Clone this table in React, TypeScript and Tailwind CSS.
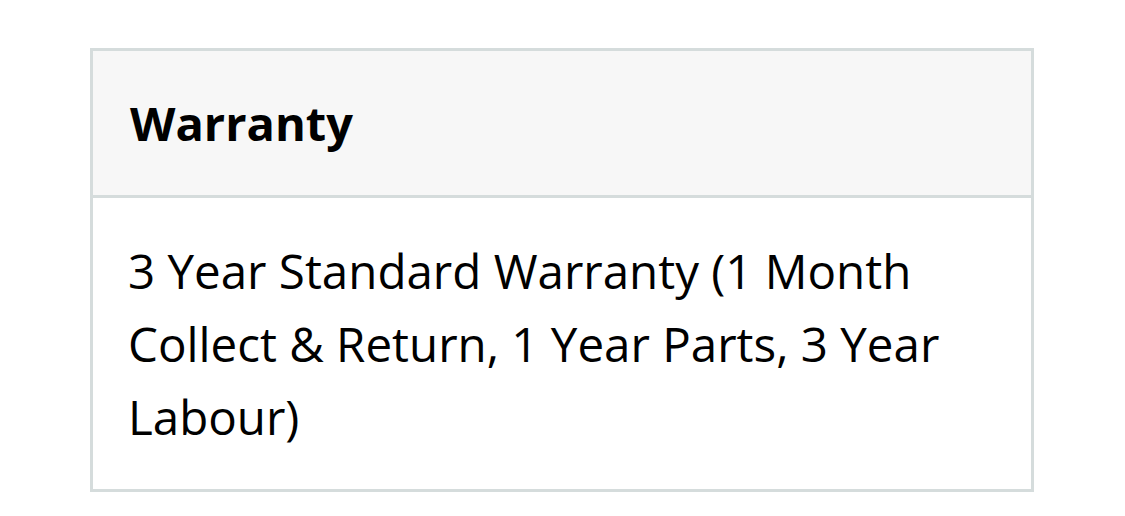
export default function App() {
  return (
    <div className="w-[1125px] h-[516px] bg-white pt-[48px] pl-[90px]" style={{ fontFamily: '"Open Sans", sans-serif' }}>
      <div className="w-[944px] border-[3px] border-[#d5dcdc] text-black">
        <div className="h-[147px] bg-[#f7f7f7] border-b-[3px] border-[#d5dcdc] flex items-center px-[37px]">
          <h2 className="text-[47px] font-bold leading-none">Warranty</h2>
        </div>
        <div className="px-[35px] pt-[36px] pb-[36px]">
          <p className="text-[47.5px] leading-[73px]">
            3 Year Standard Warranty (1 Month Collect &amp; Return, 1 Year Parts, 3 Year Labour)
          </p>
        </div>
      </div>
    </div>
  )
}
